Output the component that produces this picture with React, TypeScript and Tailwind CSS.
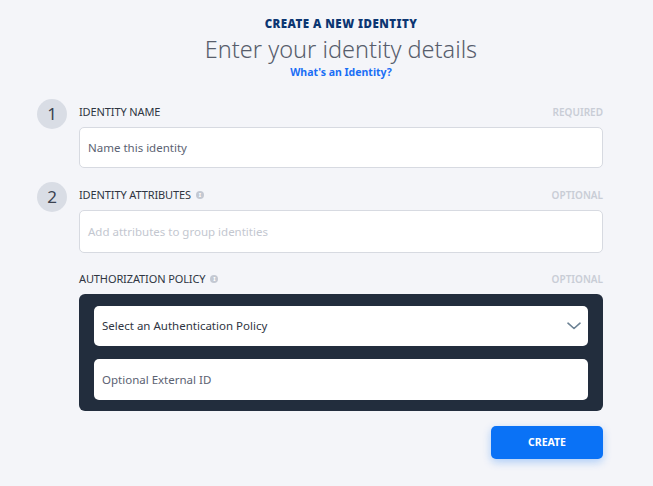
function StepCircle({ n }: { n: number }) {
  return (
    <div className="mt-[2px] flex h-[30px] w-[30px] shrink-0 items-center justify-center rounded-full bg-[#d9dde5] text-[17px] text-[#3b4250]">
      {n}
    </div>
  );
}

function InfoDot() {
  return (
    <span className="ml-[5px] inline-flex h-[8px] w-[8px] items-center justify-center rounded-full bg-[#c3c8d2] text-[6px] font-bold leading-none text-white">
      i
    </span>
  );
}

function FieldLabel({ label, hint, info }: { label: string; hint: string; info?: boolean }) {
  return (
    <div className="flex h-[30px] items-center justify-between">
      <div className="flex items-center text-[11px] uppercase tracking-[-0.01em] text-[#2f3542]">
        {label}
        {info && <InfoDot />}
      </div>
      <span className="text-[10px] font-semibold uppercase text-[#c9cdd6]">{hint}</span>
    </div>
  );
}

export default function App() {
  return (
    <div
      className="min-h-[486px] w-full bg-[#f4f5f9]"
      style={{ fontFamily: '"Noto Sans", "Open Sans", sans-serif' }}
    >
      <div className="w-[603px] pl-[37px] pt-[15px]">
        <div className="ml-[42px] w-[524px] text-center">
          <div className="text-[11.5px] font-black tracking-[0.04em] text-[#0c3672]">
            CREATE A NEW IDENTITY
          </div>
          <div className="mt-[1px] text-[23.5px] font-light leading-[32px] text-[#575d6c]">
            Enter your identity details
          </div>
          <div className="text-[10.5px] font-bold text-[#1a6ef5]">What's an Identity?</div>
        </div>

        <div className="mt-[16px] flex gap-[12px]">
          <StepCircle n={1} />
          <div className="flex-1">
            <FieldLabel label="Identity Name" hint="Required" />
            <div className="flex h-[41px] items-center rounded-[5px] border border-[#d7dae1] bg-white px-[8px] text-[11.5px] text-[#5b6272]">
              Name this identity
            </div>
          </div>
        </div>

        <div className="mt-[12px] flex gap-[12px]">
          <StepCircle n={2} />
          <div className="flex-1">
            <FieldLabel label="Identity Attributes" hint="Optional" info />
            <div className="flex h-[43px] items-center rounded-[5px] border border-[#d7dae1] bg-white px-[8px] text-[11.5px] text-[#c3c7d0]">
              Add attributes to group identities
            </div>
          </div>
        </div>

        <div className="ml-[42px] mt-[11px]">
          <FieldLabel label="Authorization Policy" hint="Optional" info />
          <div className="flex flex-col gap-[13px] rounded-[6px] bg-[#222d3d] px-[15px] pb-[11px] pt-[12px]">
            <div className="flex h-[40px] items-center justify-between rounded-[5px] bg-white pl-[8px] pr-[7px] text-[11.5px] text-[#2f3542]">
              Select an Authentication Policy
              <svg width="14" height="8" viewBox="0 0 14 8" fill="none" className="mt-[-1px]">
                <path d="M1 1.2L7 6.5L13 1.2" stroke="#6c8294" strokeWidth="1.6" strokeLinecap="round" strokeLinejoin="round" />
              </svg>
            </div>
            <div className="flex h-[41px] items-center rounded-[5px] bg-white px-[8px] text-[11.5px] text-[#5b6272]">
              Optional External ID
            </div>
          </div>
          <div className="mt-[15px] flex justify-end">
            <button className="h-[33px] w-[112px] rounded-[5px] bg-[#0a72f6] text-[10.5px] font-bold text-white shadow-[0_3px_8px_rgba(10,114,246,0.3)]">
              CREATE
            </button>
          </div>
        </div>
      </div>
    </div>
  );
}
